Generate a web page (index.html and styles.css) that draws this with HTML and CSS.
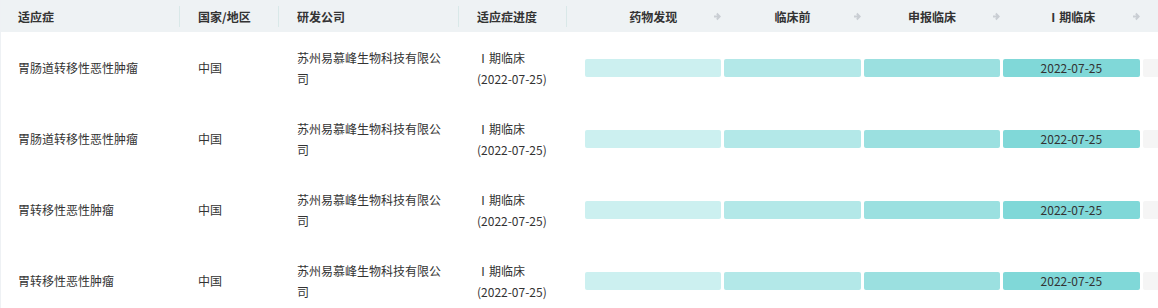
FILE: index.html
```html
<!DOCTYPE html>
<html lang="zh">
<head>
<meta charset="utf-8">
<link rel="stylesheet" href="styles.css">
</head>
<body>
<div class="wrap">
  <div class="table">
    <div class="row head">
      <div class="cell c1 sep">适应症</div>
      <div class="cell c2 sep">国家/地区</div>
      <div class="cell c3 sep">研发公司</div>
      <div class="cell c4 sep">适应症进度</div>
      <div class="cell prog">
        <div class="stages">
          <div class="stage"><span>药物发现</span><svg class="arr" width="7" height="9" viewBox="0 0 7 9"><path d="M0 4.5H5.5M2.8 1.5L5.8 4.5L2.8 7.5" fill="none" stroke="#c9ced3" stroke-width="1.8"/></svg></div>
          <div class="stage"><span>临床前</span><svg class="arr" width="7" height="9" viewBox="0 0 7 9"><path d="M0 4.5H5.5M2.8 1.5L5.8 4.5L2.8 7.5" fill="none" stroke="#c9ced3" stroke-width="1.8"/></svg></div>
          <div class="stage"><span>申报临床</span><svg class="arr" width="7" height="9" viewBox="0 0 7 9"><path d="M0 4.5H5.5M2.8 1.5L5.8 4.5L2.8 7.5" fill="none" stroke="#c9ced3" stroke-width="1.8"/></svg></div>
          <div class="stage"><span>Ⅰ期临床</span><svg class="arr" width="7" height="9" viewBox="0 0 7 9"><path d="M0 4.5H5.5M2.8 1.5L5.8 4.5L2.8 7.5" fill="none" stroke="#c9ced3" stroke-width="1.8"/></svg></div>
          <div class="stage"></div>
        </div>
      </div>
    </div>

    <div class="row body">
      <div class="cell c1">胃肠道转移性恶性肿瘤</div>
      <div class="cell c2">中国</div>
      <div class="cell c3">苏州易慕峰生物科技有限公司</div>
      <div class="cell c4">Ⅰ期临床<br>(2022-07-25)</div>
      <div class="cell prog">
        <div class="stages">
          <div class="stage"><div class="bar b1"></div></div>
          <div class="stage"><div class="bar b2"></div></div>
          <div class="stage"><div class="bar b3"></div></div>
          <div class="stage"><div class="bar b4">2022-07-25</div></div>
          <div class="stage"><div class="bar b0"></div></div>
        </div>
      </div>
    </div>

    <div class="row body">
      <div class="cell c1">胃肠道转移性恶性肿瘤</div>
      <div class="cell c2">中国</div>
      <div class="cell c3">苏州易慕峰生物科技有限公司</div>
      <div class="cell c4">Ⅰ期临床<br>(2022-07-25)</div>
      <div class="cell prog">
        <div class="stages">
          <div class="stage"><div class="bar b1"></div></div>
          <div class="stage"><div class="bar b2"></div></div>
          <div class="stage"><div class="bar b3"></div></div>
          <div class="stage"><div class="bar b4">2022-07-25</div></div>
          <div class="stage"><div class="bar b0"></div></div>
        </div>
      </div>
    </div>

    <div class="row body">
      <div class="cell c1">胃转移性恶性肿瘤</div>
      <div class="cell c2">中国</div>
      <div class="cell c3">苏州易慕峰生物科技有限公司</div>
      <div class="cell c4">Ⅰ期临床<br>(2022-07-25)</div>
      <div class="cell prog">
        <div class="stages">
          <div class="stage"><div class="bar b1"></div></div>
          <div class="stage"><div class="bar b2"></div></div>
          <div class="stage"><div class="bar b3"></div></div>
          <div class="stage"><div class="bar b4">2022-07-25</div></div>
          <div class="stage"><div class="bar b0"></div></div>
        </div>
      </div>
    </div>

    <div class="row body">
      <div class="cell c1">胃转移性恶性肿瘤</div>
      <div class="cell c2">中国</div>
      <div class="cell c3">苏州易慕峰生物科技有限公司</div>
      <div class="cell c4">Ⅰ期临床<br>(2022-07-25)</div>
      <div class="cell prog">
        <div class="stages">
          <div class="stage"><div class="bar b1"></div></div>
          <div class="stage"><div class="bar b2"></div></div>
          <div class="stage"><div class="bar b3"></div></div>
          <div class="stage"><div class="bar b4">2022-07-25</div></div>
          <div class="stage"><div class="bar b0"></div></div>
        </div>
      </div>
    </div>
  </div>
</div>
</body>
</html>
```

FILE: styles.css
```css
html, body {
  margin: 0;
  padding: 0;
  background: #ffffff;
}
body {
  font-family: "Noto Sans CJK SC", "Noto Sans", sans-serif;
  font-size: 12px;
  color: #333333;
  width: 1158px;
  height: 308px;
  overflow: hidden;
}
.wrap {
  width: 1158px;
  overflow: hidden;
}
.table {
  width: 1300px;
  border-left: 1px solid #eef1f4;
}
.row {
  display: grid;
  grid-template-columns: 179px 99px 180px 108px 732px;
}
.cell {
  box-sizing: border-box;
  padding: 0 18px;
  display: flex;
  align-items: center;
  line-height: 21px;
}
.c1 {
  padding-left: 17px;
}
.head {
  height: 32px;
  background: #eef2f4;
  font-weight: bold;
}
.head .cell {
  position: relative;
}
.head .sep::after {
  content: "";
  position: absolute;
  right: 0;
  top: 6px;
  height: 21px;
  width: 1px;
  background: #d9e8e8;
}
.body {
  height: 71px;
}
.body .c3, .body .c4 {
  display: block;
  align-self: center;
}
.prog {
  padding: 0 0 0 15px;
}
.stages {
  display: flex;
  width: 100%;
}
.stage {
  flex: 0 0 139.4px;
  box-sizing: border-box;
  padding-left: 3px;
  position: relative;
  display: flex;
  align-items: center;
  justify-content: center;
}
.head .stage {
  height: 32px;
}
.arr {
  position: absolute;
  right: 0;
  top: 12px;
}
.bar {
  width: 100%;
  height: 18px;
  line-height: 18px;
  border-radius: 2px;
  text-align: center;
  color: #333333;
  font-size: 12px;
}
.b1 { background: #ccf0f0; }
.b2 { background: #b3e8e8; }
.b3 { background: #9be0e0; }
.b4 { background: #80d8d8; }
.b0 { background: #f5f5f5; }
```
